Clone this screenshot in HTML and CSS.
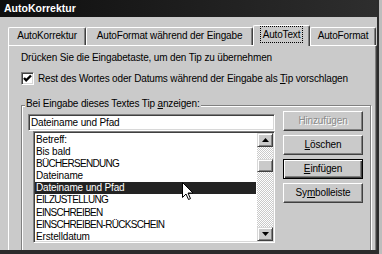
FILE: index.html
```html
<!DOCTYPE html>
<html lang="de">
<head>
<meta charset="utf-8">
<title>AutoKorrektur</title>
<link rel="stylesheet" href="styles.css">
</head>
<body>
<div class="window">
  <div class="titlebar">AutoKorrektur</div>
  <div class="content">
    <div class="tabs">
      <div class="tab t1">AutoKorrektur</div>
      <div class="tab t2">AutoFormat während der Eingabe</div>
      <div class="tab t3 active"><span class="focus">AutoText</span></div>
      <div class="tab t4">AutoFormat</div>
    </div>
    <div class="panel">
      <div class="hint">Drücken Sie die Eingabetaste, um den Tip zu übernehmen</div>
      <div class="check">
        <span class="box"><svg width="9" height="9" viewBox="0 0 9 9"><path d="M1 4 L3.2 6.3 L8 1.5" fill="none" stroke="#000" stroke-width="2.4"/></svg></span>
        <span class="label">Rest des Wortes oder Datums während der Eingabe als <u>T</u>ip vorschlagen</span>
      </div>
      <fieldset class="group">
        <legend>Bei Eingabe dieses Textes Tip <u>a</u>nzeigen:</legend>
        <div class="grouprow">
          <div class="combo">
            <div class="input">Dateiname und Pfad</div>
            <div class="list">
              <div class="items">
                <div class="item">Betreff:</div>
                <div class="item">Bis bald</div>
                <div class="item uc">BÜCHERSENDUNG</div>
                <div class="item">Dateiname</div>
                <div class="item sel">Dateiname und Pfad</div>
                <div class="item uc">EILZUSTELLUNG</div>
                <div class="item uc">EINSCHREIBEN</div>
                <div class="item uc">EINSCHREIBEN-RÜCKSCHEIN</div>
                <div class="item">Erstelldatum</div>
              </div>
              <div class="scrollbar">
                <div class="sbtn"><svg width="7" height="4" viewBox="0 0 7 4"><path d="M3.5 0 L7 4 L0 4 Z" fill="#000"/></svg></div>
                <div class="track short"></div>
                <div class="thumb"></div>
                <div class="track"></div>
                <div class="sbtn"><svg width="7" height="4" viewBox="0 0 7 4"><path d="M0 0 L7 0 L3.5 4 Z" fill="#000"/></svg></div>
              </div>
              <svg class="cursor" width="12" height="19" viewBox="0 0 12 19"><path d="M0.5 0.5 L0.5 15.5 L4 12 L6.5 17.5 L8.5 16.6 L6 11 L11 11 Z" fill="#fff" stroke="#000" stroke-width="1" stroke-linejoin="miter"/></svg>
            </div>
          </div>
          <div class="buttons">
            <div class="btn disabled">Hinzufügen</div>
            <div class="btn"><u>L</u>öschen</div>
            <div class="btn default"><u>E</u>infügen</div>
            <div class="btn">Sy<u>m</u>bolleiste</div>
          </div>
        </div>
      </fieldset>
    </div>
  </div>
</div>
</body>
</html>
```

FILE: styles.css
```css
* { box-sizing: border-box; }
html, body { margin: 0; padding: 0; }
body {
  width: 382px;
  height: 254px;
  overflow: hidden;
  background: #bdbdbd;
  font-family: "Liberation Sans", Arial, sans-serif;
  font-size: 10px;
  letter-spacing: -0.15px;
  color: #000;
}
u { text-decoration: underline; text-underline-offset: 1px; }
.window {
  width: 379px;
  height: 254px;
  background: #cacaca;
  border-right: 2px solid #2c2c2c;
  border-bottom: 4px solid #2c2c2c;
  overflow: hidden;
  display: flex;
  flex-direction: column;
}
.titlebar {
  height: 17px;
  flex: none;
  background: linear-gradient(90deg, #0e0e0e, #2e2e2e);
  color: #fff;
  font-weight: bold;
  font-size: 10.5px;
  letter-spacing: 0;
  line-height: 17px;
  padding-left: 4px;
}
.content {
  flex: 1;
  min-height: 0;
  padding: 8px 0 0 8px;
  display: flex;
  flex-direction: column;
}
.tabs {
  display: flex;
  align-items: flex-end;
  height: 20px;
  flex: none;
  position: relative;
  z-index: 1;
}
.tab {
  height: 18px;
  line-height: 16px;
  text-align: center;
  border-top: 1px solid #fff;
  border-left: 1px solid #fff;
  border-right: 1px solid #404040;
  box-shadow: inset -1px 0 #808080;
  border-radius: 2px 2px 0 0;
  background: #cacaca;
}
.t1 { width: 78px; }
.t2 { width: 167px; }
.t3 { width: 57px; }
.t4 { width: 66px; }
.tab.active {
  height: 21px;
  margin-bottom: -1px;
  padding-top: 1px;
  line-height: 16px;
}
.focus {
  display: inline-block;
  outline: 1px dotted #000;
  outline-offset: 0;
  padding: 0 2px;
  line-height: 15px;
}
.panel {
  flex: 1;
  min-height: 0;
  overflow: hidden;
  border-top: 1px solid #fff;
  border-left: 1px solid #fff;
  border-right: 1px solid #404040;
  box-shadow: inset -1px 0 #808080;
  padding: 5px 5px 0 12px;
}
.hint { line-height: 13px; }
.check {
  display: flex;
  align-items: center;
  gap: 4px;
  margin-top: 8px;
  height: 13px;
}
.box {
  width: 13px;
  height: 13px;
  flex: none;
  background: #fff;
  border: 1px solid;
  border-color: #808080 #fff #fff #808080;
  box-shadow: inset 1px 1px #404040, inset -1px -1px #d8d8d8;
  display: flex;
  align-items: center;
  justify-content: center;
}
.box svg { display: block; }
.label { line-height: 13px; }
.group {
  margin: 13px 0 0 0;
  padding: 0 7px 20px 6px;
  border: 1px solid #808080;
  box-shadow: inset 1px 1px #fff, 1px 1px #fff;
  min-width: 0;
}
.group legend {
  padding: 0 1px 3px 1px;
  margin-left: -3px;
  line-height: 11px;
  background: #cacaca;
}
.grouprow {
  display: flex;
  gap: 8px;
  align-items: flex-start;
}
.combo {
  width: 247px;
  margin-top: 2px;
  display: flex;
  flex-direction: column;
}
.input {
  height: 17px;
  background: #fff;
  border: 1px solid;
  border-color: #808080 #fff #fff #808080;
  box-shadow: inset 1px 1px #404040, inset -1px -1px #d8d8d8;
  padding-left: 2px;
  line-height: 15px;
}
.list {
  position: relative;
  margin-left: 5px;
  height: 112px;
  background: #fff;
  border: 1px solid;
  border-color: #808080 #fff #fff #808080;
  box-shadow: inset 1px 1px #404040, inset -1px -1px #d8d8d8;
  padding: 1px;
  display: flex;
  overflow: hidden;
}
.items {
  flex: 1;
  padding-top: 1px;
}
.item {
  height: 12.1px;
  line-height: 12.1px;
  padding-left: 1px;
  white-space: nowrap;
}
.item.uc { letter-spacing: -0.7px; }
.item.sel { background: #232323; color: #fff; margin-right: 1px; }
.scrollbar {
  width: 16px;
  display: flex;
  flex-direction: column;
  flex: none;
}
.sbtn, .thumb {
  background: #cacaca;
  border: 1px solid;
  border-color: #d8d8d8 #404040 #404040 #d8d8d8;
  box-shadow: inset 1px 1px #fff, inset -1px -1px #808080;
}
.sbtn {
  height: 14px;
  flex: none;
  display: flex;
  align-items: center;
  justify-content: center;
}
.sbtn svg { display: block; }
.thumb { height: 13px; flex: none; }
.track {
  flex: 1;
  background: repeating-conic-gradient(#ffffff 0 25%, #cacaca 0 50%) 0 0 / 2px 2px;
}
.track.short { flex: none; height: 12px; }
.cursor {
  position: absolute;
  left: 148px;
  top: 50px;
}
.buttons {
  width: 80px;
  margin-top: -1px;
  display: flex;
  flex-direction: column;
  gap: 4px;
}
.btn {
  height: 20px;
  line-height: 18px;
  text-align: center;
  background: #cacaca;
  border: 1px solid;
  border-color: #fff #404040 #404040 #fff;
  box-shadow: inset -1px -1px #808080;
}
.btn.default {
  border-color: #000;
  box-shadow: inset 1px 1px #fff, inset -1px -1px #404040, inset -2px -2px #808080;
}
.btn.disabled {
  color: #8a8a8a;
  text-shadow: 1px 1px #fff;
}
```
